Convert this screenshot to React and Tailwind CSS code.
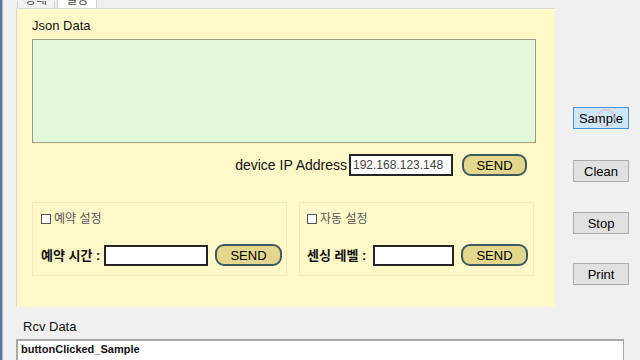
import React from 'react';

const font = { fontFamily: '"Liberation Sans", "Noto Sans CJK KR", sans-serif' };

function SendButton({ className = '' }) {
  return (
    <button
      className={`h-[22px] rounded-[9px] border-2 border-[#3d5b5e] bg-[#e2d78c] text-[13px] leading-none text-black ${className}`}
    >
      SEND
    </button>
  );
}

function SideButton({ label, active = false, className = '' }) {
  return (
    <button
      className={`h-[22px] w-[56px] border text-[13px] leading-none text-black ${
        active ? 'border-[#4a8fd6] bg-[#cfe5f8]' : 'border-[#adadad] bg-[#e1e1e1]'
      } ${className}`}
    >
      {label}
    </button>
  );
}

function GroupBox({ checkLabel, fieldLabel, labelWidth, inputWidth, className = '' }) {
  return (
    <div className={`h-[74px] border border-[#f2ebb6] pt-[10px] ${className}`}>
      {/* check row */}
      <div className="flex h-[12px] items-center gap-[3px]">
        <span className="h-[10px] w-[10px] border border-[#555] bg-white" />
        <span className="text-[12px] leading-none text-[#555]">{checkLabel}</span>
      </div>
      {/* field row */}
      <div className="mt-[19px] flex h-[22px] items-center">
        <span
          className="whitespace-nowrap text-[13px] font-bold leading-none text-[#111]"
          style={{ width: labelWidth }}
        >
          {fieldLabel}
        </span>
        <div className="h-[21px] border-2 border-[#252525] bg-white" style={{ width: inputWidth }} />
        <SendButton className="ml-[7px] w-[67px]" />
      </div>
    </div>
  );
}

export default function App() {
  return (
    <div className="relative flex h-[360px] w-[640px] overflow-hidden bg-[#f0f0f0]" style={font}>
      {/* window edge */}
      <div className="h-full w-[2px] bg-[#5c7893]" />
      <div className="h-full w-[1px] bg-[#a9b6c2]" />

      <div className="flex flex-1 flex-col">
        <div className="flex h-[307px]">
          {/* tab control */}
          <div className="ml-[13px] flex w-[539px] flex-col">
            <div className="flex h-[8px] items-end">
              <div className="ml-[1px] h-[7px] w-[38px] overflow-hidden border-x border-[#d0d0d0] bg-[#f2f2f2] text-center">
                <div className="-mt-[8px] text-[12px] leading-[14px] text-[#444]">상태</div>
              </div>
              <div className="ml-[2px] h-[8px] w-[40px] overflow-hidden border-x border-[#d0d0d0] bg-white text-center">
                <div className="-mt-[7px] text-[12px] leading-[14px] text-[#444]">설정</div>
              </div>
            </div>
            <div className="flex-1 border-l border-t border-[#d9d9d9] bg-[#fff9c9] pl-[15px] pt-[10px]">
              <div className="h-[20px] text-[13px] leading-[14px] text-[#111]">Json Data</div>
              <div className="h-[104px] w-[504px] border border-[#9c9c82] bg-[#e4f8da]" />

              {/* IP row */}
              <div className="mt-[11px] flex h-[22px] w-[495px] items-center justify-end">
                <span className="mr-[2px] text-[14px] leading-none text-[#111]">device IP Address</span>
                <div className="flex h-[22px] w-[104px] items-center border-2 border-[#252525] bg-white pl-[2px] text-[12px] leading-none text-[#444]">
                  192.168.123.148
                </div>
                <SendButton className="ml-[9px] w-[65px]" />
              </div>

              {/* group boxes */}
              <div className="mt-[26px] flex gap-[12px]">
                <GroupBox
                  className="w-[255px] pl-[8px]"
                  checkLabel="예약 설정"
                  fieldLabel="예약 시간 :"
                  labelWidth={63}
                  inputWidth={104}
                />
                <GroupBox
                  className="w-[235px] pl-[7px]"
                  checkLabel="자동 설정"
                  fieldLabel="센싱 레벨 :"
                  labelWidth={66}
                  inputWidth={81}
                />
              </div>
            </div>
          </div>

          {/* side buttons */}
          <div className="ml-[18px] flex flex-col pt-[107px]">
            <SideButton label="Sample" active />
            <SideButton label="Clean" className="mt-[31px]" />
            <SideButton label="Stop" className="mt-[30px]" />
            <SideButton label="Print" className="mt-[29px]" />
          </div>
        </div>

        {/* receive area */}
        <div className="ml-[20px] mt-[13px] h-[14px] text-[13px] leading-[14px] text-[#111]">Rcv Data</div>
        <div className="ml-[13px] mt-[5px] w-[608px] flex-1 border-l-2 border-r border-t-2 border-[#a8a8a8] bg-white pl-[3px] pt-[2px]">
          <div className="text-[11px] font-bold leading-[13px] text-[#111]">buttonClicked_Sample</div>
        </div>
      </div>

      {/* cursor hover ring over Sample */}
      <div className="absolute left-[597px] top-[109px] h-[18px] w-[18px] rounded-full border border-[#e9b8c4]" />
    </div>
  );
}
